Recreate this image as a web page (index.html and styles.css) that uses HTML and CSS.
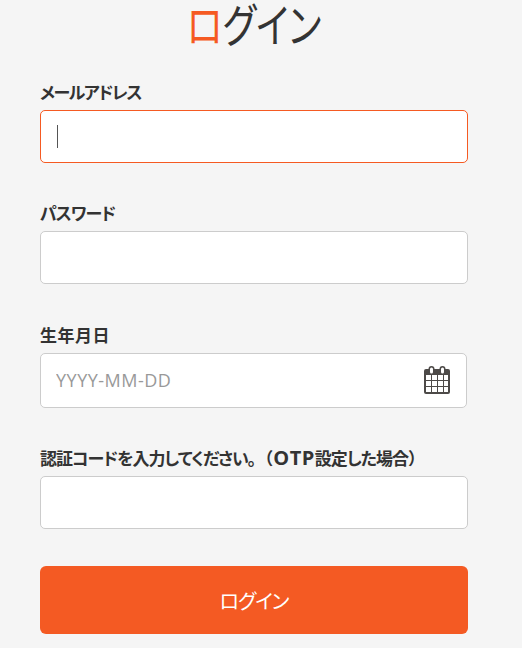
FILE: index.html
```html
<!DOCTYPE html>
<html lang="ja">
<head>
  <meta charset="UTF-8" />
  <title>ログイン</title>
  <link rel="stylesheet" href="styles.css">
</head>
<body>
  <div class="login-container">
    <div class="login-head">
      <h1 class="login-title"><span class="accent">ロ</span>グイン</h1>
    </div>

    <form class="login-form" onsubmit="return false;">
      <div class="field-group">
        <label for="email" class="label-email">メールアドレス</label>
        <div class="input-wrap">
          <input type="text" id="email" class="is-active" />
          <span class="caret"></span>
        </div>
      </div>

      <div class="field-group field-password">
        <label for="password">パスワード</label>
        <input type="password" id="password" />
      </div>

      <div class="field-group">
        <label for="birthday" class="label-date">生年月日</label>
        <div class="input-wrap">
          <input type="text" id="birthday" placeholder="YYYY-MM-DD" />
          <svg class="calendar-icon" viewBox="0 0 26 28" width="26" height="28" aria-hidden="true">
            <rect x="0" y="3" width="26" height="25" rx="2" fill="#4d4a48" />
            <rect x="4.5" y="0" width="6" height="9" rx="3" fill="#4d4a48" />
            <rect x="15.5" y="0" width="6" height="9" rx="3" fill="#4d4a48" />
            <rect x="6" y="1.5" width="3" height="6" rx="1.5" fill="#fff" />
            <rect x="17" y="1.5" width="3" height="6" rx="1.5" fill="#fff" />
            <g fill="#fff">
              <rect x="2" y="9" width="5" height="5" />
              <rect x="8" y="9" width="5" height="5" />
              <rect x="14" y="9" width="5" height="5" />
              <rect x="20" y="9" width="4" height="5" />
              <rect x="2" y="15" width="5" height="5" />
              <rect x="8" y="15" width="5" height="5" />
              <rect x="14" y="15" width="5" height="5" />
              <rect x="20" y="15" width="4" height="5" />
              <rect x="2" y="21" width="5" height="5" />
              <rect x="8" y="21" width="5" height="5" />
              <rect x="14" y="21" width="5" height="5" />
              <rect x="20" y="21" width="4" height="5" />
            </g>
          </svg>
        </div>
      </div>

      <div class="field-group field-otp">
        <label for="otp">認証コードを入力してください<span class="full">。（</span><span class="latin">OTP</span>設定した場合<span class="full">）</span></label>
        <input type="text" id="otp" />
      </div>

      <button class="button" type="submit">ログイン</button>
    </form>
  </div>
</body>
</html>
```

FILE: styles.css
```css
* {
  box-sizing: border-box;
  font-family: "Open Sans", "Noto Sans CJK JP", sans-serif;
}

html, body {
  height: 100%;
}

body {
  margin: 0;
  background: #f5f5f5;
  color: #333;
  overflow: hidden;
}

.login-container {
  width: 428px;
  margin-left: 40px;
}

.login-head {
  height: 80px;
  display: flex;
  justify-content: center;
}

.login-title {
  margin: 0;
  transform: scaleX(0.8);
  font-family: "Liberation Sans", "Noto Sans CJK JP", sans-serif;
  font-size: 46px;
  line-height: 52px;
  font-weight: 400;
  font-feature-settings: "palt";
  white-space: nowrap;
  color: #333;
}

.accent {
  font-family: "Liberation Sans", "Noto Sans CJK JP", sans-serif;
  color: #f55a22;
}

.field-group {
  margin-bottom: 38px;
}

.field-password {
  margin-bottom: 39px;
}

.field-otp {
  margin-bottom: 37px;
}

label {
  display: block;
  height: 30px;
  font-size: 17px;
  line-height: 26px;
  font-weight: 700;
  font-feature-settings: "palt";
  letter-spacing: -1px;
  white-space: nowrap;
  color: #333;
}

.label-email {
  letter-spacing: -1.4px;
}

.label-date {
  letter-spacing: 0.5px;
}

.full {
  font-feature-settings: normal;
  letter-spacing: 0;
}

.latin {
  font-size: 20px;
  line-height: 20px;
  letter-spacing: 0.5px;
}

.input-wrap {
  position: relative;
}

input {
  display: block;
  width: 100%;
  height: 53px;
  padding: 0 15px;
  border: 1px solid #ccc;
  border-radius: 5px;
  background: #fff;
  color: #333;
  font-size: 18px;
  outline: none;
}

input.is-active {
  border-color: #f55a22;
}

#birthday {
  width: 427px;
  height: 55px;
  padding-bottom: 2px;
}

input::placeholder {
  color: #999;
  opacity: 1;
  letter-spacing: 0.5px;
}

.caret {
  position: absolute;
  left: 17px;
  top: 15px;
  width: 1px;
  height: 23px;
  background: #555;
}

.calendar-icon {
  position: absolute;
  right: 18px;
  top: 13px;
}

.button {
  display: block;
  width: 100%;
  height: 68px;
  padding-top: 2px;
  border: none;
  border-radius: 6px;
  background: #f45a23;
  color: #fff;
  font-size: 20px;
  font-weight: 400;
  font-feature-settings: "palt";
  letter-spacing: -1px;
  cursor: pointer;
}
```
